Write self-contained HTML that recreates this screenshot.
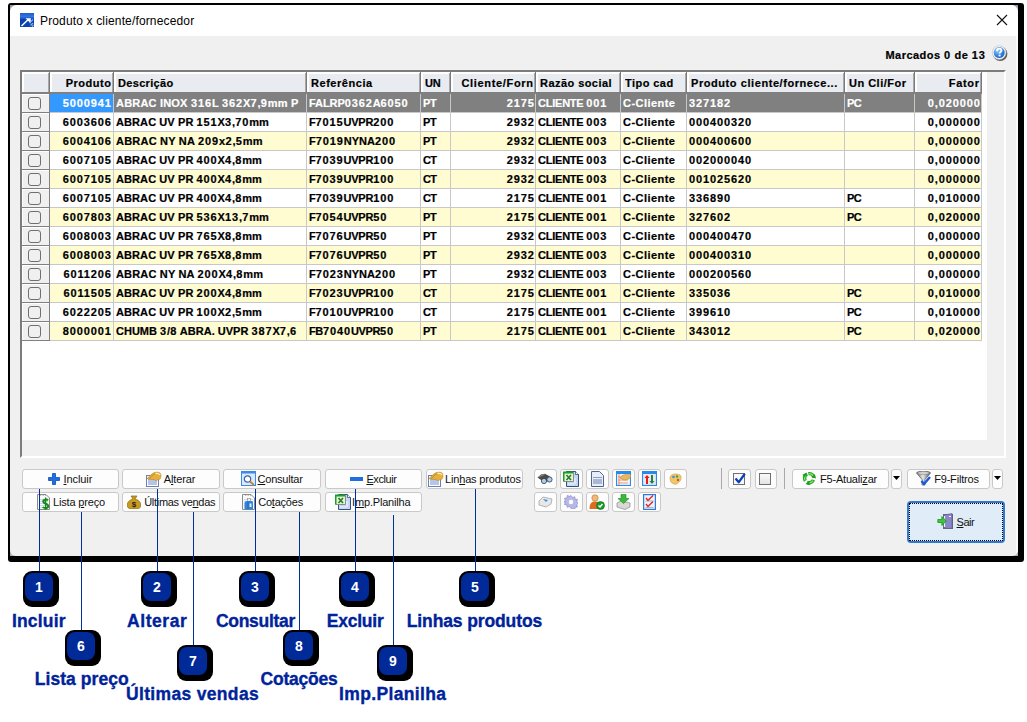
<!DOCTYPE html>
<html><head><meta charset="utf-8">
<style>
*{box-sizing:border-box;margin:0;padding:0}
html,body{width:1027px;height:722px;overflow:hidden;background:#fff;font-family:"Liberation Sans",sans-serif;}
.a{position:absolute}
.hd{position:absolute;top:73px;height:20px;line-height:21px;font-size:11px;font-weight:bold;letter-spacing:0.3px;color:#000;-webkit-text-stroke:0.2px #000;white-space:nowrap;overflow:hidden}
.c{position:absolute;height:18px;line-height:18px;font-size:11px;font-weight:bold;letter-spacing:0.3px;color:#000;-webkit-text-stroke:0.2px currentColor;white-space:nowrap;overflow:hidden}
.btn{position:absolute;background:#fdfdfd;border:1px solid #c9c9c9;border-radius:3px}
.bt{position:absolute;font-size:11px;line-height:13px;color:#111;white-space:nowrap;letter-spacing:-0.1px}
.u{text-decoration:underline}
.d{letter-spacing:0.884px}
.ln{position:absolute;width:1px;background:#00309e}
.bdg{position:absolute;width:36px;height:36px;background:#000;border-radius:9px}
.bdg i{position:absolute;left:2px;top:2px;width:28px;height:28px;background:#002a98;border-radius:8px;color:#fff;font-style:normal;font-weight:bold;font-size:14px;line-height:28px;text-align:center}
.lbl{position:absolute;font-size:17.5px;font-weight:bold;color:#00239a;-webkit-text-stroke:0.35px #00239a;white-space:nowrap;line-height:20px}
</style></head><body>

<div class="a" style="left:8px;top:3px;width:1016px;height:559px;background:#000;border-radius:3px"></div>
<div class="a" style="left:10px;top:5px;width:1008px;height:8px;background:linear-gradient(#8a96aa,#c8d0dc)"></div>
<div class="a" style="left:10px;top:548px;width:1008px;height:8px;background:#b0b0b0"></div>
<div class="a" style="left:10px;top:5px;width:1008px;height:551px;background:#f0f0f0;border-radius:7px 7px 6px 6px;overflow:hidden">
<div class="a" style="left:0;top:0;width:1008px;height:31px;background:#fff"></div>
<div class="a" style="left:1006px;top:31px;width:2px;height:520px;background:#fafafa"></div>
</div>
<svg class="a" style="left:20px;top:13px" width="14" height="14" viewBox="0 0 14 14">
<defs><linearGradient id="tg" x1="0" y1="0" x2="0" y2="1"><stop offset="0" stop-color="#1e5cd0"/><stop offset="0.25" stop-color="#3474dc"/><stop offset="0.4" stop-color="#1a56c4"/><stop offset="0.42" stop-color="#0840ae"/><stop offset="1" stop-color="#0a44b4"/></linearGradient></defs>
<rect x="0" y="0" width="14" height="14" fill="url(#tg)"/>
<path d="M5.5 5.2 H10.8 V10.5z" fill="#fff"/>
<path d="M1.5 13 L8 6.8" stroke="#fff" stroke-width="1.5"/>
<path d="M9.5 10 L13 6.5 M10.5 12.5 L13 10 M12 13.5 L13.5 12" stroke="#8fb0e8" stroke-width="1.1"/>
</svg>
<div class="a" style="left:40px;top:13px;font-size:12px;line-height:16px;color:#000;white-space:nowrap;letter-spacing:0.15px">Produto x cliente/fornecedor</div>
<svg class="a" style="left:996px;top:14px" width="12" height="12" viewBox="0 0 12 12"><path d="M1 1 L11 11 M11 1 L1 11" stroke="#111" stroke-width="1.1"/></svg>
<div class="a" style="left:800px;top:47px;width:185.884px;text-align:right;font-size:11px;font-weight:bold;letter-spacing:0.464px;line-height:16px;color:#000;-webkit-text-stroke:0.2px #000;white-space:nowrap">Marcados <span class="d">0</span> de <span class="d">13</span></div>
<svg class="a" style="left:990px;top:43px" width="20" height="20" viewBox="0 0 20 20">
<defs><radialGradient id="hg" cx="0.35" cy="0.3" r="0.75"><stop offset="0" stop-color="#a8d4fa"/><stop offset="0.55" stop-color="#3d8ee6"/><stop offset="1" stop-color="#1660c8"/></radialGradient>
<filter id="hb" x="-50%" y="-50%" width="200%" height="200%"><feGaussianBlur stdDeviation="0.7"/></filter></defs>
<circle cx="10.2" cy="10.8" r="7.2" fill="#5a5a5a" filter="url(#hb)"/>
<circle cx="9.2" cy="9.6" r="6.9" fill="#f4f4f4" stroke="#b8b8b8" stroke-width="0.5"/>
<circle cx="9.2" cy="9.6" r="5.5" fill="url(#hg)"/>
<path d="M7 8 C7 6 8.2 5.6 9.3 5.6 C10.6 5.6 11.5 6.4 11.5 7.4 C11.5 8.8 9.6 9 9.6 10.6" stroke="#fff" stroke-width="1.8" fill="none"/><rect x="8.6" y="11.6" width="2" height="1.8" fill="#fff"/></svg>
<div class="a" style="left:20px;top:70px;width:986px;height:388px;background:#fff;border-top:2px solid #7c7c7c;border-left:2px solid #7c7c7c;border-right:2px solid #fff;border-bottom:2px solid #fff"></div>
<div class="a" style="left:987px;top:72px;width:17px;height:384px;background:#f0f0f0"></div>
<div class="a" style="left:22px;top:440px;width:982px;height:16px;background:#f0f0f0"></div>
<div class="a" style="left:22px;top:72px;width:960px;height:22px;background:#e8ecf0"></div>
<div class="a" style="left:22px;top:72px;width:959px;height:2px;background:#fff"></div>
<div class="a" style="left:22px;top:92px;width:960px;height:2px;background:#808080"></div>
<div class="a" style="left:22px;top:72px;width:2px;height:20px;background:#fff"></div>
<div class="a" style="left:48px;top:73px;width:1px;height:19px;background:#a8a8a8"></div>
<div class="a" style="left:49px;top:72px;width:1px;height:21px;background:#7a7a7a"></div>
<div class="a" style="left:50px;top:72px;width:2px;height:20px;background:#fff"></div>
<div class="a" style="left:112px;top:73px;width:1px;height:19px;background:#a8a8a8"></div>
<div class="a" style="left:113px;top:72px;width:1px;height:21px;background:#7a7a7a"></div>
<div class="a" style="left:114px;top:72px;width:2px;height:20px;background:#fff"></div>
<div class="a" style="left:305px;top:73px;width:1px;height:19px;background:#a8a8a8"></div>
<div class="a" style="left:306px;top:72px;width:1px;height:21px;background:#7a7a7a"></div>
<div class="a" style="left:307px;top:72px;width:2px;height:20px;background:#fff"></div>
<div class="a" style="left:419px;top:73px;width:1px;height:19px;background:#a8a8a8"></div>
<div class="a" style="left:420px;top:72px;width:1px;height:21px;background:#7a7a7a"></div>
<div class="a" style="left:421px;top:72px;width:2px;height:20px;background:#fff"></div>
<div class="a" style="left:449px;top:73px;width:1px;height:19px;background:#a8a8a8"></div>
<div class="a" style="left:450px;top:72px;width:1px;height:21px;background:#7a7a7a"></div>
<div class="a" style="left:451px;top:72px;width:2px;height:20px;background:#fff"></div>
<div class="a" style="left:534px;top:73px;width:1px;height:19px;background:#a8a8a8"></div>
<div class="a" style="left:535px;top:72px;width:1px;height:21px;background:#7a7a7a"></div>
<div class="a" style="left:536px;top:72px;width:2px;height:20px;background:#fff"></div>
<div class="a" style="left:619px;top:73px;width:1px;height:19px;background:#a8a8a8"></div>
<div class="a" style="left:620px;top:72px;width:1px;height:21px;background:#7a7a7a"></div>
<div class="a" style="left:621px;top:72px;width:2px;height:20px;background:#fff"></div>
<div class="a" style="left:685px;top:73px;width:1px;height:19px;background:#a8a8a8"></div>
<div class="a" style="left:686px;top:72px;width:1px;height:21px;background:#7a7a7a"></div>
<div class="a" style="left:687px;top:72px;width:2px;height:20px;background:#fff"></div>
<div class="a" style="left:843px;top:73px;width:1px;height:19px;background:#a8a8a8"></div>
<div class="a" style="left:844px;top:72px;width:1px;height:21px;background:#7a7a7a"></div>
<div class="a" style="left:845px;top:72px;width:2px;height:20px;background:#fff"></div>
<div class="a" style="left:913px;top:73px;width:1px;height:19px;background:#a8a8a8"></div>
<div class="a" style="left:914px;top:72px;width:1px;height:21px;background:#7a7a7a"></div>
<div class="a" style="left:915px;top:72px;width:2px;height:20px;background:#fff"></div>
<div class="a" style="left:980px;top:73px;width:1px;height:19px;background:#a8a8a8"></div>
<div class="a" style="left:981px;top:72px;width:1px;height:21px;background:#7a7a7a"></div>
<div class="hd" style="left:50px;width:61.52px;text-align:right;letter-spacing:0.52px">Produto</div>
<div class="hd" style="left:118px;width:188px;letter-spacing:0.324px">Descrição</div>
<div class="hd" style="left:311px;width:109px;letter-spacing:0.545px">Referência</div>
<div class="hd" style="left:425px;width:25px;letter-spacing:-0.194px">UN</div>
<div class="hd" style="left:451px;width:82.669px;text-align:right;letter-spacing:0.669px">Cliente/Forn</div>
<div class="hd" style="left:540px;width:80px;letter-spacing:0.447px">Razão social</div>
<div class="hd" style="left:625px;width:61px;letter-spacing:0.447px">Tipo cad</div>
<div class="hd" style="left:691px;width:153px;letter-spacing:0.568px">Produto cliente/fornece...</div>
<div class="hd" style="left:849px;width:65px;letter-spacing:0.485px">Un Cli/For</div>
<div class="hd" style="left:915px;width:64.68px;text-align:right;letter-spacing:0.68px">Fator</div>
<div class="a" style="left:22px;top:94px;width:27px;height:18px;background:#f0f0f0;border-top:1px solid #fff;border-left:1px solid #fff"></div>
<div class="a" style="left:22px;top:112px;width:28px;height:1px;background:#808080"></div>
<div class="a" style="left:28px;top:97px;width:13px;height:13px;border:1.5px solid #6f6f6f;border-radius:3px;background:#f0f0f0"></div>
<div class="a" style="left:50px;top:94px;width:931px;height:18px;background:#808080"></div>
<div class="a" style="left:50px;top:112px;width:932px;height:1px;background:#c8c8c8"></div>
<div class="a" style="left:50px;top:94px;width:63px;height:18px;background:#3399ff"></div>
<div class="c" style="left:50px;top:94px;width:61.884px;text-align:right;color:#fff;letter-spacing:0.884px"><span class="d">5000941</span></div>
<div class="c" style="left:116px;top:94px;width:190px;color:#fff;letter-spacing:0.197px">ABRAC INOX <span class="d">316</span>L <span class="d">362</span>X<span class="d">7</span>,<span class="d">9</span>mm P</div>
<div class="c" style="left:309px;top:94px;width:111px;color:#fff;letter-spacing:-0.069px">FALRP<span class="d">0362</span>A<span class="d">6050</span></div>
<div class="c" style="left:423px;top:94px;width:27px;color:#fff;letter-spacing:-0.278px">PT</div>
<div class="c" style="left:451px;top:94px;width:83.884px;text-align:right;color:#fff;letter-spacing:0.884px"><span class="d">2175</span></div>
<div class="c" style="left:538px;top:94px;width:82px;color:#fff;letter-spacing:-0.227px">CLIENTE <span class="d">001</span></div>
<div class="c" style="left:623px;top:94px;width:63px;color:#fff;letter-spacing:0.458px">C-Cliente</div>
<div class="c" style="left:689px;top:94px;width:155px;color:#fff;letter-spacing:0.884px"><span class="d">327182</span></div>
<div class="c" style="left:847px;top:94px;width:67px;color:#fff;letter-spacing:-0.64px">PC</div>
<div class="c" style="left:915px;top:94px;width:65.884px;text-align:right;color:#fff;letter-spacing:0.932px"><span class="d">0</span>,<span class="d">020000</span></div>
<div class="a" style="left:22px;top:113px;width:27px;height:18px;background:#f0f0f0;border-top:1px solid #fff;border-left:1px solid #fff"></div>
<div class="a" style="left:22px;top:131px;width:28px;height:1px;background:#808080"></div>
<div class="a" style="left:28px;top:116px;width:13px;height:13px;border:1.5px solid #6f6f6f;border-radius:3px;background:#f0f0f0"></div>
<div class="a" style="left:50px;top:113px;width:931px;height:18px;background:#ffffff"></div>
<div class="a" style="left:50px;top:131px;width:932px;height:1px;background:#c8c8c8"></div>
<div class="c" style="left:50px;top:113px;width:61.884px;text-align:right;color:#000;letter-spacing:0.884px"><span class="d">6003606</span></div>
<div class="c" style="left:116px;top:113px;width:190px;color:#000;letter-spacing:0.093px">ABRAC UV PR <span class="d">151</span>X<span class="d">3</span>,<span class="d">70</span>mm</div>
<div class="c" style="left:309px;top:113px;width:111px;color:#000;letter-spacing:-0.238px">F<span class="d">7015</span>UVPR<span class="d">200</span></div>
<div class="c" style="left:423px;top:113px;width:27px;color:#000;letter-spacing:-0.278px">PT</div>
<div class="c" style="left:451px;top:113px;width:83.884px;text-align:right;color:#000;letter-spacing:0.884px"><span class="d">2932</span></div>
<div class="c" style="left:538px;top:113px;width:82px;color:#000;letter-spacing:-0.227px">CLIENTE <span class="d">003</span></div>
<div class="c" style="left:623px;top:113px;width:63px;color:#000;letter-spacing:0.458px">C-Cliente</div>
<div class="c" style="left:689px;top:113px;width:155px;color:#000;letter-spacing:0.884px"><span class="d">000400320</span></div>
<div class="c" style="left:915px;top:113px;width:65.884px;text-align:right;color:#000;letter-spacing:0.932px"><span class="d">0</span>,<span class="d">000000</span></div>
<div class="a" style="left:22px;top:132px;width:27px;height:18px;background:#f0f0f0;border-top:1px solid #fff;border-left:1px solid #fff"></div>
<div class="a" style="left:22px;top:150px;width:28px;height:1px;background:#808080"></div>
<div class="a" style="left:28px;top:135px;width:13px;height:13px;border:1.5px solid #6f6f6f;border-radius:3px;background:#f0f0f0"></div>
<div class="a" style="left:50px;top:132px;width:931px;height:18px;background:#fffcd2"></div>
<div class="a" style="left:50px;top:150px;width:932px;height:1px;background:#c8c8c8"></div>
<div class="c" style="left:50px;top:132px;width:61.884px;text-align:right;color:#000;letter-spacing:0.884px"><span class="d">6004106</span></div>
<div class="c" style="left:116px;top:132px;width:190px;color:#000;letter-spacing:0.213px">ABRAC NY NA <span class="d">209</span>x<span class="d">2</span>,<span class="d">5</span>mm</div>
<div class="c" style="left:309px;top:132px;width:111px;color:#000;letter-spacing:0.02px">F<span class="d">7019</span>NYNA<span class="d">200</span></div>
<div class="c" style="left:423px;top:132px;width:27px;color:#000;letter-spacing:-0.278px">PT</div>
<div class="c" style="left:451px;top:132px;width:83.884px;text-align:right;color:#000;letter-spacing:0.884px"><span class="d">2932</span></div>
<div class="c" style="left:538px;top:132px;width:82px;color:#000;letter-spacing:-0.227px">CLIENTE <span class="d">003</span></div>
<div class="c" style="left:623px;top:132px;width:63px;color:#000;letter-spacing:0.458px">C-Cliente</div>
<div class="c" style="left:689px;top:132px;width:155px;color:#000;letter-spacing:0.884px"><span class="d">000400600</span></div>
<div class="c" style="left:915px;top:132px;width:65.884px;text-align:right;color:#000;letter-spacing:0.932px"><span class="d">0</span>,<span class="d">000000</span></div>
<div class="a" style="left:22px;top:151px;width:27px;height:18px;background:#f0f0f0;border-top:1px solid #fff;border-left:1px solid #fff"></div>
<div class="a" style="left:22px;top:169px;width:28px;height:1px;background:#808080"></div>
<div class="a" style="left:28px;top:154px;width:13px;height:13px;border:1.5px solid #6f6f6f;border-radius:3px;background:#f0f0f0"></div>
<div class="a" style="left:50px;top:151px;width:931px;height:18px;background:#ffffff"></div>
<div class="a" style="left:50px;top:169px;width:932px;height:1px;background:#c8c8c8"></div>
<div class="c" style="left:50px;top:151px;width:61.884px;text-align:right;color:#000;letter-spacing:0.884px"><span class="d">6007105</span></div>
<div class="c" style="left:116px;top:151px;width:190px;color:#000;letter-spacing:0.093px">ABRAC UV PR <span class="d">400</span>X<span class="d">4</span>,<span class="d">8</span>mm</div>
<div class="c" style="left:309px;top:151px;width:111px;color:#000;letter-spacing:-0.238px">F<span class="d">7039</span>UVPR<span class="d">100</span></div>
<div class="c" style="left:423px;top:151px;width:27px;color:#000;letter-spacing:-0.582px">CT</div>
<div class="c" style="left:451px;top:151px;width:83.884px;text-align:right;color:#000;letter-spacing:0.884px"><span class="d">2932</span></div>
<div class="c" style="left:538px;top:151px;width:82px;color:#000;letter-spacing:-0.227px">CLIENTE <span class="d">003</span></div>
<div class="c" style="left:623px;top:151px;width:63px;color:#000;letter-spacing:0.458px">C-Cliente</div>
<div class="c" style="left:689px;top:151px;width:155px;color:#000;letter-spacing:0.884px"><span class="d">002000040</span></div>
<div class="c" style="left:915px;top:151px;width:65.884px;text-align:right;color:#000;letter-spacing:0.932px"><span class="d">0</span>,<span class="d">000000</span></div>
<div class="a" style="left:22px;top:170px;width:27px;height:18px;background:#f0f0f0;border-top:1px solid #fff;border-left:1px solid #fff"></div>
<div class="a" style="left:22px;top:188px;width:28px;height:1px;background:#808080"></div>
<div class="a" style="left:28px;top:173px;width:13px;height:13px;border:1.5px solid #6f6f6f;border-radius:3px;background:#f0f0f0"></div>
<div class="a" style="left:50px;top:170px;width:931px;height:18px;background:#fffcd2"></div>
<div class="a" style="left:50px;top:188px;width:932px;height:1px;background:#c8c8c8"></div>
<div class="c" style="left:50px;top:170px;width:61.884px;text-align:right;color:#000;letter-spacing:0.884px"><span class="d">6007105</span></div>
<div class="c" style="left:116px;top:170px;width:190px;color:#000;letter-spacing:0.093px">ABRAC UV PR <span class="d">400</span>X<span class="d">4</span>,<span class="d">8</span>mm</div>
<div class="c" style="left:309px;top:170px;width:111px;color:#000;letter-spacing:-0.238px">F<span class="d">7039</span>UVPR<span class="d">100</span></div>
<div class="c" style="left:423px;top:170px;width:27px;color:#000;letter-spacing:-0.582px">CT</div>
<div class="c" style="left:451px;top:170px;width:83.884px;text-align:right;color:#000;letter-spacing:0.884px"><span class="d">2932</span></div>
<div class="c" style="left:538px;top:170px;width:82px;color:#000;letter-spacing:-0.227px">CLIENTE <span class="d">003</span></div>
<div class="c" style="left:623px;top:170px;width:63px;color:#000;letter-spacing:0.458px">C-Cliente</div>
<div class="c" style="left:689px;top:170px;width:155px;color:#000;letter-spacing:0.884px"><span class="d">001025620</span></div>
<div class="c" style="left:915px;top:170px;width:65.884px;text-align:right;color:#000;letter-spacing:0.932px"><span class="d">0</span>,<span class="d">000000</span></div>
<div class="a" style="left:22px;top:189px;width:27px;height:18px;background:#f0f0f0;border-top:1px solid #fff;border-left:1px solid #fff"></div>
<div class="a" style="left:22px;top:207px;width:28px;height:1px;background:#808080"></div>
<div class="a" style="left:28px;top:192px;width:13px;height:13px;border:1.5px solid #6f6f6f;border-radius:3px;background:#f0f0f0"></div>
<div class="a" style="left:50px;top:189px;width:931px;height:18px;background:#ffffff"></div>
<div class="a" style="left:50px;top:207px;width:932px;height:1px;background:#c8c8c8"></div>
<div class="c" style="left:50px;top:189px;width:61.884px;text-align:right;color:#000;letter-spacing:0.884px"><span class="d">6007105</span></div>
<div class="c" style="left:116px;top:189px;width:190px;color:#000;letter-spacing:0.093px">ABRAC UV PR <span class="d">400</span>X<span class="d">4</span>,<span class="d">8</span>mm</div>
<div class="c" style="left:309px;top:189px;width:111px;color:#000;letter-spacing:-0.238px">F<span class="d">7039</span>UVPR<span class="d">100</span></div>
<div class="c" style="left:423px;top:189px;width:27px;color:#000;letter-spacing:-0.582px">CT</div>
<div class="c" style="left:451px;top:189px;width:83.884px;text-align:right;color:#000;letter-spacing:0.884px"><span class="d">2175</span></div>
<div class="c" style="left:538px;top:189px;width:82px;color:#000;letter-spacing:-0.227px">CLIENTE <span class="d">001</span></div>
<div class="c" style="left:623px;top:189px;width:63px;color:#000;letter-spacing:0.458px">C-Cliente</div>
<div class="c" style="left:689px;top:189px;width:155px;color:#000;letter-spacing:0.884px"><span class="d">336890</span></div>
<div class="c" style="left:847px;top:189px;width:67px;color:#000;letter-spacing:-0.64px">PC</div>
<div class="c" style="left:915px;top:189px;width:65.884px;text-align:right;color:#000;letter-spacing:0.932px"><span class="d">0</span>,<span class="d">010000</span></div>
<div class="a" style="left:22px;top:208px;width:27px;height:18px;background:#f0f0f0;border-top:1px solid #fff;border-left:1px solid #fff"></div>
<div class="a" style="left:22px;top:226px;width:28px;height:1px;background:#808080"></div>
<div class="a" style="left:28px;top:211px;width:13px;height:13px;border:1.5px solid #6f6f6f;border-radius:3px;background:#f0f0f0"></div>
<div class="a" style="left:50px;top:208px;width:931px;height:18px;background:#fffcd2"></div>
<div class="a" style="left:50px;top:226px;width:932px;height:1px;background:#c8c8c8"></div>
<div class="c" style="left:50px;top:208px;width:61.884px;text-align:right;color:#000;letter-spacing:0.884px"><span class="d">6007803</span></div>
<div class="c" style="left:116px;top:208px;width:190px;color:#000;letter-spacing:0.093px">ABRAC UV PR <span class="d">536</span>X<span class="d">13</span>,<span class="d">7</span>mm</div>
<div class="c" style="left:309px;top:208px;width:111px;color:#000;letter-spacing:-0.238px">F<span class="d">7054</span>UVPR<span class="d">50</span></div>
<div class="c" style="left:423px;top:208px;width:27px;color:#000;letter-spacing:-0.278px">PT</div>
<div class="c" style="left:451px;top:208px;width:83.884px;text-align:right;color:#000;letter-spacing:0.884px"><span class="d">2175</span></div>
<div class="c" style="left:538px;top:208px;width:82px;color:#000;letter-spacing:-0.227px">CLIENTE <span class="d">001</span></div>
<div class="c" style="left:623px;top:208px;width:63px;color:#000;letter-spacing:0.458px">C-Cliente</div>
<div class="c" style="left:689px;top:208px;width:155px;color:#000;letter-spacing:0.884px"><span class="d">327602</span></div>
<div class="c" style="left:847px;top:208px;width:67px;color:#000;letter-spacing:-0.64px">PC</div>
<div class="c" style="left:915px;top:208px;width:65.884px;text-align:right;color:#000;letter-spacing:0.932px"><span class="d">0</span>,<span class="d">020000</span></div>
<div class="a" style="left:22px;top:227px;width:27px;height:18px;background:#f0f0f0;border-top:1px solid #fff;border-left:1px solid #fff"></div>
<div class="a" style="left:22px;top:245px;width:28px;height:1px;background:#808080"></div>
<div class="a" style="left:28px;top:230px;width:13px;height:13px;border:1.5px solid #6f6f6f;border-radius:3px;background:#f0f0f0"></div>
<div class="a" style="left:50px;top:227px;width:931px;height:18px;background:#ffffff"></div>
<div class="a" style="left:50px;top:245px;width:932px;height:1px;background:#c8c8c8"></div>
<div class="c" style="left:50px;top:227px;width:61.884px;text-align:right;color:#000;letter-spacing:0.884px"><span class="d">6008003</span></div>
<div class="c" style="left:116px;top:227px;width:190px;color:#000;letter-spacing:0.093px">ABRAC UV PR <span class="d">765</span>X<span class="d">8</span>,<span class="d">8</span>mm</div>
<div class="c" style="left:309px;top:227px;width:111px;color:#000;letter-spacing:-0.238px">F<span class="d">7076</span>UVPR<span class="d">50</span></div>
<div class="c" style="left:423px;top:227px;width:27px;color:#000;letter-spacing:-0.278px">PT</div>
<div class="c" style="left:451px;top:227px;width:83.884px;text-align:right;color:#000;letter-spacing:0.884px"><span class="d">2932</span></div>
<div class="c" style="left:538px;top:227px;width:82px;color:#000;letter-spacing:-0.227px">CLIENTE <span class="d">003</span></div>
<div class="c" style="left:623px;top:227px;width:63px;color:#000;letter-spacing:0.458px">C-Cliente</div>
<div class="c" style="left:689px;top:227px;width:155px;color:#000;letter-spacing:0.884px"><span class="d">000400470</span></div>
<div class="c" style="left:915px;top:227px;width:65.884px;text-align:right;color:#000;letter-spacing:0.932px"><span class="d">0</span>,<span class="d">000000</span></div>
<div class="a" style="left:22px;top:246px;width:27px;height:18px;background:#f0f0f0;border-top:1px solid #fff;border-left:1px solid #fff"></div>
<div class="a" style="left:22px;top:264px;width:28px;height:1px;background:#808080"></div>
<div class="a" style="left:28px;top:249px;width:13px;height:13px;border:1.5px solid #6f6f6f;border-radius:3px;background:#f0f0f0"></div>
<div class="a" style="left:50px;top:246px;width:931px;height:18px;background:#fffcd2"></div>
<div class="a" style="left:50px;top:264px;width:932px;height:1px;background:#c8c8c8"></div>
<div class="c" style="left:50px;top:246px;width:61.884px;text-align:right;color:#000;letter-spacing:0.884px"><span class="d">6008003</span></div>
<div class="c" style="left:116px;top:246px;width:190px;color:#000;letter-spacing:0.093px">ABRAC UV PR <span class="d">765</span>X<span class="d">8</span>,<span class="d">8</span>mm</div>
<div class="c" style="left:309px;top:246px;width:111px;color:#000;letter-spacing:-0.238px">F<span class="d">7076</span>UVPR<span class="d">50</span></div>
<div class="c" style="left:423px;top:246px;width:27px;color:#000;letter-spacing:-0.278px">PT</div>
<div class="c" style="left:451px;top:246px;width:83.884px;text-align:right;color:#000;letter-spacing:0.884px"><span class="d">2932</span></div>
<div class="c" style="left:538px;top:246px;width:82px;color:#000;letter-spacing:-0.227px">CLIENTE <span class="d">003</span></div>
<div class="c" style="left:623px;top:246px;width:63px;color:#000;letter-spacing:0.458px">C-Cliente</div>
<div class="c" style="left:689px;top:246px;width:155px;color:#000;letter-spacing:0.884px"><span class="d">000400310</span></div>
<div class="c" style="left:915px;top:246px;width:65.884px;text-align:right;color:#000;letter-spacing:0.932px"><span class="d">0</span>,<span class="d">000000</span></div>
<div class="a" style="left:22px;top:265px;width:27px;height:18px;background:#f0f0f0;border-top:1px solid #fff;border-left:1px solid #fff"></div>
<div class="a" style="left:22px;top:283px;width:28px;height:1px;background:#808080"></div>
<div class="a" style="left:28px;top:268px;width:13px;height:13px;border:1.5px solid #6f6f6f;border-radius:3px;background:#f0f0f0"></div>
<div class="a" style="left:50px;top:265px;width:931px;height:18px;background:#ffffff"></div>
<div class="a" style="left:50px;top:283px;width:932px;height:1px;background:#c8c8c8"></div>
<div class="c" style="left:50px;top:265px;width:61.884px;text-align:right;color:#000;letter-spacing:0.884px"><span class="d">6011206</span></div>
<div class="c" style="left:116px;top:265px;width:190px;color:#000;letter-spacing:0.174px">ABRAC NY NA <span class="d">200</span>X<span class="d">4</span>,<span class="d">8</span>mm</div>
<div class="c" style="left:309px;top:265px;width:111px;color:#000;letter-spacing:0.02px">F<span class="d">7023</span>NYNA<span class="d">200</span></div>
<div class="c" style="left:423px;top:265px;width:27px;color:#000;letter-spacing:-0.278px">PT</div>
<div class="c" style="left:451px;top:265px;width:83.884px;text-align:right;color:#000;letter-spacing:0.884px"><span class="d">2932</span></div>
<div class="c" style="left:538px;top:265px;width:82px;color:#000;letter-spacing:-0.227px">CLIENTE <span class="d">003</span></div>
<div class="c" style="left:623px;top:265px;width:63px;color:#000;letter-spacing:0.458px">C-Cliente</div>
<div class="c" style="left:689px;top:265px;width:155px;color:#000;letter-spacing:0.884px"><span class="d">000200560</span></div>
<div class="c" style="left:915px;top:265px;width:65.884px;text-align:right;color:#000;letter-spacing:0.932px"><span class="d">0</span>,<span class="d">000000</span></div>
<div class="a" style="left:22px;top:284px;width:27px;height:18px;background:#f0f0f0;border-top:1px solid #fff;border-left:1px solid #fff"></div>
<div class="a" style="left:22px;top:302px;width:28px;height:1px;background:#808080"></div>
<div class="a" style="left:28px;top:287px;width:13px;height:13px;border:1.5px solid #6f6f6f;border-radius:3px;background:#f0f0f0"></div>
<div class="a" style="left:50px;top:284px;width:931px;height:18px;background:#fffcd2"></div>
<div class="a" style="left:50px;top:302px;width:932px;height:1px;background:#c8c8c8"></div>
<div class="c" style="left:50px;top:284px;width:61.884px;text-align:right;color:#000;letter-spacing:0.884px"><span class="d">6011505</span></div>
<div class="c" style="left:116px;top:284px;width:190px;color:#000;letter-spacing:0.093px">ABRAC UV PR <span class="d">200</span>X<span class="d">4</span>,<span class="d">8</span>mm</div>
<div class="c" style="left:309px;top:284px;width:111px;color:#000;letter-spacing:-0.238px">F<span class="d">7023</span>UVPR<span class="d">100</span></div>
<div class="c" style="left:423px;top:284px;width:27px;color:#000;letter-spacing:-0.582px">CT</div>
<div class="c" style="left:451px;top:284px;width:83.884px;text-align:right;color:#000;letter-spacing:0.884px"><span class="d">2175</span></div>
<div class="c" style="left:538px;top:284px;width:82px;color:#000;letter-spacing:-0.227px">CLIENTE <span class="d">001</span></div>
<div class="c" style="left:623px;top:284px;width:63px;color:#000;letter-spacing:0.458px">C-Cliente</div>
<div class="c" style="left:689px;top:284px;width:155px;color:#000;letter-spacing:0.884px"><span class="d">335036</span></div>
<div class="c" style="left:847px;top:284px;width:67px;color:#000;letter-spacing:-0.64px">PC</div>
<div class="c" style="left:915px;top:284px;width:65.884px;text-align:right;color:#000;letter-spacing:0.932px"><span class="d">0</span>,<span class="d">010000</span></div>
<div class="a" style="left:22px;top:303px;width:27px;height:18px;background:#f0f0f0;border-top:1px solid #fff;border-left:1px solid #fff"></div>
<div class="a" style="left:22px;top:321px;width:28px;height:1px;background:#808080"></div>
<div class="a" style="left:28px;top:306px;width:13px;height:13px;border:1.5px solid #6f6f6f;border-radius:3px;background:#f0f0f0"></div>
<div class="a" style="left:50px;top:303px;width:931px;height:18px;background:#ffffff"></div>
<div class="a" style="left:50px;top:321px;width:932px;height:1px;background:#c8c8c8"></div>
<div class="c" style="left:50px;top:303px;width:61.884px;text-align:right;color:#000;letter-spacing:0.884px"><span class="d">6022205</span></div>
<div class="c" style="left:116px;top:303px;width:190px;color:#000;letter-spacing:0.093px">ABRAC UV PR <span class="d">100</span>X<span class="d">2</span>,<span class="d">5</span>mm</div>
<div class="c" style="left:309px;top:303px;width:111px;color:#000;letter-spacing:-0.238px">F<span class="d">7010</span>UVPR<span class="d">100</span></div>
<div class="c" style="left:423px;top:303px;width:27px;color:#000;letter-spacing:-0.582px">CT</div>
<div class="c" style="left:451px;top:303px;width:83.884px;text-align:right;color:#000;letter-spacing:0.884px"><span class="d">2175</span></div>
<div class="c" style="left:538px;top:303px;width:82px;color:#000;letter-spacing:-0.227px">CLIENTE <span class="d">001</span></div>
<div class="c" style="left:623px;top:303px;width:63px;color:#000;letter-spacing:0.458px">C-Cliente</div>
<div class="c" style="left:689px;top:303px;width:155px;color:#000;letter-spacing:0.884px"><span class="d">399610</span></div>
<div class="c" style="left:847px;top:303px;width:67px;color:#000;letter-spacing:-0.64px">PC</div>
<div class="c" style="left:915px;top:303px;width:65.884px;text-align:right;color:#000;letter-spacing:0.932px"><span class="d">0</span>,<span class="d">010000</span></div>
<div class="a" style="left:22px;top:322px;width:27px;height:18px;background:#f0f0f0;border-top:1px solid #fff;border-left:1px solid #fff"></div>
<div class="a" style="left:22px;top:340px;width:28px;height:1px;background:#808080"></div>
<div class="a" style="left:28px;top:325px;width:13px;height:13px;border:1.5px solid #6f6f6f;border-radius:3px;background:#f0f0f0"></div>
<div class="a" style="left:50px;top:322px;width:931px;height:18px;background:#fffcd2"></div>
<div class="a" style="left:50px;top:340px;width:932px;height:1px;background:#c8c8c8"></div>
<div class="c" style="left:50px;top:322px;width:61.884px;text-align:right;color:#000;letter-spacing:0.884px"><span class="d">8000001</span></div>
<div class="c" style="left:116px;top:322px;width:190px;color:#000;letter-spacing:0.009px">CHUMB <span class="d">3</span>/<span class="d">8</span> ABRA. UVPR <span class="d">387</span>X<span class="d">7</span>,<span class="d">6</span></div>
<div class="c" style="left:309px;top:322px;width:111px;color:#000;letter-spacing:-0.356px">FB<span class="d">7040</span>UVPR<span class="d">50</span></div>
<div class="c" style="left:423px;top:322px;width:27px;color:#000;letter-spacing:-0.278px">PT</div>
<div class="c" style="left:451px;top:322px;width:83.884px;text-align:right;color:#000;letter-spacing:0.884px"><span class="d">2175</span></div>
<div class="c" style="left:538px;top:322px;width:82px;color:#000;letter-spacing:-0.227px">CLIENTE <span class="d">001</span></div>
<div class="c" style="left:623px;top:322px;width:63px;color:#000;letter-spacing:0.458px">C-Cliente</div>
<div class="c" style="left:689px;top:322px;width:155px;color:#000;letter-spacing:0.884px"><span class="d">343012</span></div>
<div class="c" style="left:847px;top:322px;width:67px;color:#000;letter-spacing:-0.64px">PC</div>
<div class="c" style="left:915px;top:322px;width:65.884px;text-align:right;color:#000;letter-spacing:0.932px"><span class="d">0</span>,<span class="d">020000</span></div>
<div class="a" style="left:49px;top:94px;width:1px;height:247px;background:#808080"></div>
<div class="a" style="left:113px;top:94px;width:1px;height:247px;background:#c8c8c8"></div>
<div class="a" style="left:306px;top:94px;width:1px;height:247px;background:#c8c8c8"></div>
<div class="a" style="left:420px;top:94px;width:1px;height:247px;background:#c8c8c8"></div>
<div class="a" style="left:450px;top:94px;width:1px;height:247px;background:#c8c8c8"></div>
<div class="a" style="left:535px;top:94px;width:1px;height:247px;background:#c8c8c8"></div>
<div class="a" style="left:620px;top:94px;width:1px;height:247px;background:#c8c8c8"></div>
<div class="a" style="left:686px;top:94px;width:1px;height:247px;background:#c8c8c8"></div>
<div class="a" style="left:844px;top:94px;width:1px;height:247px;background:#c8c8c8"></div>
<div class="a" style="left:914px;top:94px;width:1px;height:247px;background:#c8c8c8"></div>
<div class="a" style="left:981px;top:94px;width:1px;height:247px;background:#c8c8c8"></div>
<div class="btn" style="left:22px;top:469px;width:97px;height:20px;"></div>
<div class="btn" style="left:122px;top:469px;width:98px;height:20px;"></div>
<div class="btn" style="left:223px;top:469px;width:98px;height:20px;"></div>
<div class="btn" style="left:325px;top:469px;width:97px;height:20px;"></div>
<div class="btn" style="left:426px;top:469px;width:97px;height:20px;"></div>
<div class="btn" style="left:22px;top:492px;width:97px;height:20px;"></div>
<div class="btn" style="left:122px;top:492px;width:98px;height:20px;"></div>
<div class="btn" style="left:223px;top:492px;width:98px;height:20px;"></div>
<div class="btn" style="left:325px;top:492px;width:97px;height:20px;"></div>
<div class="btn" style="left:534px;top:469px;width:23px;height:20px;"></div>
<div class="btn" style="left:560px;top:469px;width:23px;height:20px;"></div>
<div class="btn" style="left:586px;top:469px;width:23px;height:20px;"></div>
<div class="btn" style="left:612px;top:469px;width:23px;height:20px;"></div>
<div class="btn" style="left:638px;top:469px;width:23px;height:20px;"></div>
<div class="btn" style="left:664px;top:469px;width:23px;height:20px;"></div>
<div class="btn" style="left:534px;top:492px;width:23px;height:20px;"></div>
<div class="btn" style="left:560px;top:492px;width:23px;height:20px;"></div>
<div class="btn" style="left:586px;top:492px;width:23px;height:20px;"></div>
<div class="btn" style="left:612px;top:492px;width:23px;height:20px;"></div>
<div class="btn" style="left:638px;top:492px;width:23px;height:20px;"></div>
<div class="a" style="left:721px;top:468px;width:1px;height:21px;background:#a8a8a8"></div>
<div class="a" style="left:784px;top:468px;width:1px;height:21px;background:#a8a8a8"></div>
<div class="btn" style="left:728px;top:469px;width:23px;height:20px;"></div>
<div class="btn" style="left:755px;top:469px;width:22px;height:20px;"></div>
<div class="btn" style="left:792px;top:469px;width:97px;height:20px;"></div>
<div class="btn" style="left:891px;top:469px;width:11px;height:20px;"></div>
<div class="btn" style="left:907px;top:469px;width:83px;height:20px;"></div>
<div class="btn" style="left:992px;top:469px;width:11px;height:20px;"></div>
<div class="a" style="left:907px;top:501px;width:98px;height:42px;background:#e0edf9;border:2px solid #2a7ad6;border-radius:4px"></div>
<div class="a" style="left:909px;top:503px;width:94px;height:38px;border:1px dotted #000"></div>
<div class="bt" style="left:63.5px;top:473px;letter-spacing:-0.08px"><span class="u">I</span>ncluir</div>
<div class="bt" style="left:163.8px;top:473px;letter-spacing:-0.14px">A<span class="u">l</span>terar</div>
<div class="bt" style="left:257.6px;top:473px;letter-spacing:-0.23px"><span class="u">C</span>onsultar</div>
<div class="bt" style="left:366.4px;top:473px;letter-spacing:-0.4px"><span class="u">E</span>xcluir</div>
<div class="bt" style="left:445px;top:473px;letter-spacing:-0.17px">Lin<span class="u">h</span>as produtos</div>
<div class="bt" style="left:53px;top:496px;letter-spacing:-0.17px">Lista <span class="u">p</span>reço</div>
<div class="bt" style="left:144.2px;top:496px;letter-spacing:-0.3px">Últimas ve<span class="u">n</span>das</div>
<div class="bt" style="left:258.2px;top:496px;letter-spacing:-0.22px">Co<span class="u">t</span>ações</div>
<div class="bt" style="left:352.1px;top:496px;letter-spacing:-0.19px">I<span class="u">m</span>p.Planilha</div>
<div class="bt" style="left:820px;top:473px;letter-spacing:-0.19px">F5-Atuali<span class="u">z</span>ar</div>
<div class="bt" style="left:934.2px;top:473px;letter-spacing:-0.19px">F9-Filtros</div>
<div class="bt" style="left:956.6px;top:516px;letter-spacing:-0.5px"><span class="u">S</span>air</div>
<svg class="a" style="left:48px;top:473px" width="12" height="12" viewBox="0 0 12 12"><path d="M4.5 0.5h3v4h4v3h-4v4h-3v-4h-4v-3h4z" fill="#1f6fe0" stroke="#0b4fb8" stroke-width="0.8"/></svg>
<svg class="a" style="left:145px;top:471px" width="17" height="16" viewBox="0 0 17 16"><rect x="1.5" y="4.5" width="12" height="11" fill="#fff" stroke="#6a80b0"/><rect x="3" y="7" width="9" height="7" fill="#b4c4ea"/><path d="M2 7.5 C3.5 6.5 5 4.5 7 3 C8.5 1.6 10 1.2 12 1.2 L14 1.4 C15.8 1.9 16.2 4 15.8 6.3 C15.4 8.3 14 9 12 9.1 L10.5 9.6 L9.3 8.7 L7 8.3 L4 8.3 Z" fill="#e6b040" stroke="#b88420" stroke-width="0.6"/><path d="M4 7.2 L6 6.4 M6 5.2 L8 4.6 M8 3.4 L10 3" stroke="#a87010" stroke-width="0.6"/><path d="M10.5 2.5 C12.5 2.2 14 2.5 15 4" stroke="#fff4c0" stroke-width="1.1" fill="none"/></svg>
<svg class="a" style="left:241px;top:471px" width="15" height="15" viewBox="0 0 15 15"><rect x="0.5" y="0.5" width="14" height="14" fill="#dbe9fb" stroke="#3c8ae6"/><rect x="0.5" y="0.5" width="14" height="2" fill="#3c8ae6"/><circle cx="6.5" cy="8" r="3.2" fill="#fff" stroke="#3b63a8" stroke-width="1.2"/><path d="M9 10.5 L13 14" stroke="#c9862a" stroke-width="2"/></svg>
<svg class="a" style="left:350px;top:477px" width="13" height="4" viewBox="0 0 13 4"><rect x="0" y="0" width="13" height="4" fill="#1f6fe0"/></svg>
<svg class="a" style="left:427px;top:471px" width="17" height="16" viewBox="0 0 17 16"><rect x="1.5" y="4.5" width="12" height="11" fill="#fff" stroke="#6a80b0"/><rect x="3" y="7" width="9" height="7" fill="#b4c4ea"/><path d="M2 7.5 C3.5 6.5 5 4.5 7 3 C8.5 1.6 10 1.2 12 1.2 L14 1.4 C15.8 1.9 16.2 4 15.8 6.3 C15.4 8.3 14 9 12 9.1 L10.5 9.6 L9.3 8.7 L7 8.3 L4 8.3 Z" fill="#e6b040" stroke="#b88420" stroke-width="0.6"/><path d="M4 7.2 L6 6.4 M6 5.2 L8 4.6 M8 3.4 L10 3" stroke="#a87010" stroke-width="0.6"/><path d="M10.5 2.5 C12.5 2.2 14 2.5 15 4" stroke="#fff4c0" stroke-width="1.1" fill="none"/></svg>
<svg class="a" style="left:37px;top:494px" width="13" height="16" viewBox="0 0 13 16"><path d="M0.5 0.5h8.5l3.5 3.5v11.5h-12z" fill="#fafafa" stroke="#8a8a8a"/><path d="M2 5.5h9M2 7.5h9M2 9.5h9M2 11.5h9M2 13.5h9" stroke="#c4d4ea" stroke-width="0.9"/><path d="M3 0.5l1 1.5M5.5 0.5l1 1.5M8 0.5l1 1.5" stroke="#999" stroke-width="0.8"/><g transform="translate(1 0)"><path d="M10 6.3 C9 5.2 5.2 5.2 5.2 7.6 C5.2 9.9 10.3 9.6 10.3 12 C10.3 14.5 6 14.5 4.8 13" stroke="#128a1a" stroke-width="2" fill="none"/><path d="M7.6 3.5V15.8" stroke="#128a1a" stroke-width="1.3"/></g></svg>
<svg class="a" style="left:127px;top:495px" width="14" height="14" viewBox="0 0 14 14"><path d="M4 1h6l-2 3c4 1 6 4 6 6.5c0 2.5-3 3.5-7 3.5s-7-1-7-3.5c0-2.5 2-5.5 6-6.5z" fill="#c89a20" stroke="#8a6510" stroke-width="0.7"/><text x="7" y="12" text-anchor="middle" font-family="Liberation Sans" font-weight="bold" font-size="8" fill="#222">$</text></svg>
<svg class="a" style="left:242px;top:494px" width="13" height="16" viewBox="0 0 13 16"><path d="M0.5 0.5h8.5l3.5 3.5v11.5h-12z" fill="#fafafa" stroke="#8a8a8a"/><path d="M2 5.5h9M2 7.5h9M2 9.5h9M2 11.5h9M2 13.5h9" stroke="#c4d4ea" stroke-width="0.9"/><path d="M3 0.5l1 1.5M5.5 0.5l1 1.5M8 0.5l1 1.5" stroke="#999" stroke-width="0.8"/><rect x="5.5" y="4.5" width="3" height="3" fill="#f0f0f0" stroke="#888" stroke-width="0.6"/><path d="M2.5 9.5 Q2.5 7 5 7 H10 Q11 7 11 9 V15.5 H3.5 Q2.5 15.5 2.5 14z" fill="#2f86e0"/><path d="M6 7.5V15" stroke="#1a5ab8" stroke-width="0.8"/><rect x="7.5" y="9.5" width="2" height="3.5" fill="#f4e8d0"/></svg>
<svg class="a" style="left:335px;top:494px" width="16" height="16" viewBox="0 0 16 16"><path d="M3.5 0.5h9l3 3v12h-12z" fill="#c4d8f4" stroke="#34507c" stroke-width="1"/><path d="M12.5 0.5v3h3" fill="#fff" stroke="#34507c" stroke-width="0.8"/><path d="M5 13h6M12 7v6" stroke="#eef4fc" stroke-width="1.2"/><rect x="0.5" y="1.5" width="10" height="9" fill="#dcf8cc"/><path d="M0.5 10.5V1.5h10" fill="none" stroke="#1e9a2e" stroke-width="2"/><path d="M10.5 1.5v9h-10" fill="none" stroke="#777" stroke-width="0.8"/><path d="M3.5 4 L8 9 M8 4 L3.5 9" stroke="#2a7a2a" stroke-width="1.6"/></svg>
<svg class="a" style="left:537px;top:473px" width="16" height="11" viewBox="0 0 16 11"><path d="M0.5 4.5 L4 1.5 L8 0.8 L12 3 L14.5 5.5 L10 8.5 L5.5 8 Z" fill="#4a4a4a"/><path d="M1.5 4 L7.5 1.5" stroke="#9a9a9a" stroke-width="0.8"/><circle cx="7" cy="8" r="2.6" fill="#a8d0f4" stroke="#3a3a3a" stroke-width="0.8"/><circle cx="12.5" cy="6.5" r="2.6" fill="#a8d0f4" stroke="#3a3a3a" stroke-width="0.8"/></svg>
<svg class="a" style="left:563px;top:471px" width="16" height="16" viewBox="0 0 16 16"><path d="M3.5 0.5h9l3 3v12h-12z" fill="#c4d8f4" stroke="#34507c" stroke-width="1"/><path d="M12.5 0.5v3h3" fill="#fff" stroke="#34507c" stroke-width="0.8"/><path d="M5 13h6M12 7v6" stroke="#eef4fc" stroke-width="1.2"/><rect x="0.5" y="1.5" width="10" height="9" fill="#dcf8cc"/><path d="M0.5 10.5V1.5h10" fill="none" stroke="#1e9a2e" stroke-width="2"/><path d="M10.5 1.5v9h-10" fill="none" stroke="#777" stroke-width="0.8"/><path d="M3.5 4 L8 9 M8 4 L3.5 9" stroke="#2a7a2a" stroke-width="1.6"/></svg>
<svg class="a" style="left:591px;top:471px" width="13" height="16" viewBox="0 0 13 16"><path d="M0.5 0.5h8l4 4v11h-12z" fill="#e8eef8" stroke="#4f6694" stroke-width="1"/><rect x="2" y="8" width="9" height="5" fill="#aab8d6"/><path d="M2 6.5h9" stroke="#8a9cc2"/></svg>
<svg class="a" style="left:616px;top:471px" width="15" height="15" viewBox="0 0 15 15"><rect x="0.5" y="0.5" width="14" height="14" fill="#f4f4fa" stroke="#2a8ae8" stroke-width="1.2"/><rect x="0.5" y="0.5" width="14" height="2.5" fill="#2a8ae8"/><path d="M3 3v11M2 6h10M2 9h10M2 12h10" stroke="#f08050" stroke-width="0.8"/><path d="M4 7 C6 3 11 3 15 4 C15 7 12 9 8 9z" fill="#e6b860" stroke="#b98a30" stroke-width="0.6"/></svg>
<svg class="a" style="left:642px;top:471px" width="15" height="15" viewBox="0 0 15 15"><rect x="0.5" y="0.5" width="14" height="14" fill="#e8e8f8" stroke="#2a8ae8" stroke-width="1.2"/><rect x="0.5" y="0.5" width="14" height="2.5" fill="#2a8ae8"/><path d="M5 13V5.5" stroke="#e81818" stroke-width="2"/><path d="M2.5 7 L5 4 L7.5 7z" fill="#e81818"/><path d="M10 4v7.5" stroke="#1a8a2a" stroke-width="2"/><path d="M7.5 10 L10 13 L12.5 10z" fill="#1a8a2a"/></svg>
<svg class="a" style="left:669px;top:473px" width="13" height="12" viewBox="0 0 13 12"><path d="M1 5 C1 1 7 0 11 2 C13 4 12 8 10 9 C8 10 9 12 5 11 C2 10 1 8 1 5z" fill="#f0c868" stroke="#c89a40" stroke-width="0.6"/><circle cx="4.5" cy="4" r="1.3" fill="#4a8ae0"/><circle cx="8" cy="3.5" r="1.2" fill="#3aa840"/><circle cx="9" cy="7" r="1.2" fill="#e04848"/></svg>
<svg class="a" style="left:538px;top:496px" width="15" height="12" viewBox="0 0 15 12"><path d="M1 5 L5 1 L14 3 L13 8 L8 11 L1 9z" fill="#e8e8e8" stroke="#999" stroke-width="0.7"/><path d="M5 3 L10 4 L8 6z" fill="#3a8ae8"/></svg>
<svg class="a" style="left:564px;top:495px" width="14" height="14" viewBox="0 0 14 14"><path d="M7 0.5l1.5 2 2.3-0.8 0.3 2.4 2.4 0.4-0.9 2.3 2 1.4-2 1.4 0.9 2.3-2.4 0.4-0.3 2.4-2.3-0.8L7 13.5l-1.5-2-2.3 0.8-0.3-2.4-2.4-0.4 0.9-2.3L-0.6 7l2-1.4-0.9-2.3 2.4-0.4 0.3-2.4 2.3 0.8z" fill="#b8b8e8" stroke="#8080c0" stroke-width="0.6"/><circle cx="7" cy="7" r="2.2" fill="#fff"/></svg>
<svg class="a" style="left:589px;top:494px" width="16" height="16" viewBox="0 0 16 16"><circle cx="6" cy="4" r="3.2" fill="#f2b878" stroke="#b87838" stroke-width="0.6"/><path d="M0.5 15 C0.5 9 3 7.5 6 7.5 C9 7.5 11 9 11 15z" fill="#e06a20"/><circle cx="11.5" cy="11.5" r="4" fill="#1a9a2a" stroke="#0a6a1a" stroke-width="0.6"/><path d="M9.5 11.5 L11 13 L13.5 10" stroke="#fff" stroke-width="1.4" fill="none"/></svg>
<svg class="a" style="left:616px;top:494px" width="15" height="16" viewBox="0 0 15 16"><path d="M1 9 L5 7 L14 9 L14 13 L9 15.5 L1 13z" fill="#d8d8d8" stroke="#888" stroke-width="0.7"/><path d="M5 0.5h5v4h3l-5.5 5-5.5-5h3z" fill="#3ab83a" stroke="#1a8a1a" stroke-width="0.6"/></svg>
<svg class="a" style="left:643px;top:494px" width="13" height="16" viewBox="0 0 13 16"><rect x="0.6" y="0.6" width="11.8" height="14.8" fill="#f0f0f8" stroke="#2a7ae0" stroke-width="1.2"/><path d="M3 4 L5 6.5 L10 1.5 M3 10 L5 12.5 L10 7.5" stroke="#e02020" stroke-width="1.3" fill="none"/><path d="M2.5 7h8M2.5 13.5h8" stroke="#888" stroke-width="0.6"/></svg>
<div class="a" style="left:733px;top:473px;width:12px;height:12px;border:1px solid #707070;background:#f8f8f8"></div>
<svg class="a" style="left:733px;top:472px" width="14" height="14" viewBox="0 0 14 14"><path d="M2.5 6.5 L5.8 10.2 L11.8 1.8" stroke="#0a3cc0" stroke-width="2.3" fill="none" stroke-linejoin="round"/></svg>
<div class="a" style="left:759px;top:473px;width:12px;height:12px;border:1px solid #707070;background:linear-gradient(#fafafa,#e4e4e4)"></div>
<svg class="a" style="left:802px;top:471px" width="15" height="15" viewBox="0 0 15 15"><g transform="translate(7.2 7.2)"><circle r="4.6" fill="none" stroke="#22a822" stroke-width="3.4" stroke-dasharray="7.6 2" transform="rotate(-100)"/><circle r="4.6" fill="none" stroke="#8ee86a" stroke-width="1.2" stroke-dasharray="5 4.6" transform="rotate(-90)"/><path d="M-6.8 -3.5 L-2.8 -5.2 L-4.2 -1z M5.8 -4 L6.6 0.6 L2.8 -1.6z M0.5 7 L-3.8 5.8 L0.2 3.4z" fill="#1a9a1a"/></g></svg>
<svg class="a" style="left:893px;top:476px" width="7" height="4" viewBox="0 0 7 4"><path d="M0 0h7L3.5 4z" fill="#000"/></svg>
<svg class="a" style="left:994px;top:476px" width="7" height="4" viewBox="0 0 7 4"><path d="M0 0h7L3.5 4z" fill="#000"/></svg>
<svg class="a" style="left:916px;top:471px" width="16" height="15" viewBox="0 0 16 15"><defs><linearGradient id="fn" x1="0" y1="0" x2="1" y2="0"><stop offset="0" stop-color="#606060"/><stop offset="0.45" stop-color="#e8e8e8"/><stop offset="1" stop-color="#505050"/></linearGradient></defs><path d="M0.5 2 C0.5 -0.3 14.5 -0.3 14.5 2 L9 8.5 L9 14 L6 14 L6 8.5z" fill="url(#fn)" stroke="#555" stroke-width="0.7"/><ellipse cx="7.5" cy="2" rx="6" ry="1.4" fill="#d8d8d8" stroke="#777" stroke-width="0.5"/><path d="M5.5 10 L8 13 L14 6" stroke="#1a5ad8" stroke-width="2.4" fill="none" stroke-linejoin="round"/></svg>
<svg class="a" style="left:937px;top:513px" width="17" height="16" viewBox="0 0 17 16"><rect x="6" y="1" width="10" height="15" fill="#6a6a6a"/><path d="M7 2 L15 0.5 L15 15.5 L7 15z" fill="#8a86c8" stroke="#5a5690" stroke-width="0.6"/><path d="M7.5 3 V14" stroke="#e8f4ff" stroke-width="1.2"/><rect x="12" y="3" width="2" height="1" fill="#fff"/><path d="M0.8 6.5h4v-3l4.6 4.5-4.6 4.5v-3h-4z" fill="#3ac83a" stroke="#108a10" stroke-width="0.7"/></svg>
<div class="ln" style="left:39px;top:489px;height:84px"></div>
<div class="ln" style="left:157px;top:489px;height:84px"></div>
<div class="ln" style="left:255px;top:489px;height:84px"></div>
<div class="ln" style="left:355px;top:489px;height:84px"></div>
<div class="ln" style="left:475px;top:489px;height:84px"></div>
<div class="ln" style="left:81px;top:512px;height:120px"></div>
<div class="ln" style="left:193px;top:512px;height:135px"></div>
<div class="ln" style="left:299px;top:512px;height:120px"></div>
<div class="ln" style="left:393px;top:515px;height:132px"></div>
<div class="bdg" style="left:23px;top:571px"><i>1</i></div>
<div class="bdg" style="left:141px;top:571px"><i>2</i></div>
<div class="bdg" style="left:239px;top:571px"><i>3</i></div>
<div class="bdg" style="left:339px;top:571px"><i>4</i></div>
<div class="bdg" style="left:459px;top:571px"><i>5</i></div>
<div class="bdg" style="left:65px;top:630px"><i>6</i></div>
<div class="bdg" style="left:177px;top:645px"><i>7</i></div>
<div class="bdg" style="left:283px;top:630px"><i>8</i></div>
<div class="bdg" style="left:377px;top:645px"><i>9</i></div>
<div class="lbl" style="left:11.9px;top:611px;letter-spacing:0.2px">Incluir</div>
<div class="lbl" style="left:127px;top:611px;letter-spacing:0.57px">Alterar</div>
<div class="lbl" style="left:216px;top:611px;letter-spacing:-0.31px">Consultar</div>
<div class="lbl" style="left:326.8px;top:611px;letter-spacing:-0.24px">Excluir</div>
<div class="lbl" style="left:406.8px;top:611px;letter-spacing:-0.12px">Linhas produtos</div>
<div class="lbl" style="left:34.8px;top:669px;letter-spacing:0.05px">Lista preço</div>
<div class="lbl" style="left:126px;top:684px;letter-spacing:0.33px">Últimas vendas</div>
<div class="lbl" style="left:260.6px;top:669px;letter-spacing:-0.23px">Cotações</div>
<div class="lbl" style="left:339px;top:684px;letter-spacing:0.36px">Imp.Planilha</div>
</body></html>
